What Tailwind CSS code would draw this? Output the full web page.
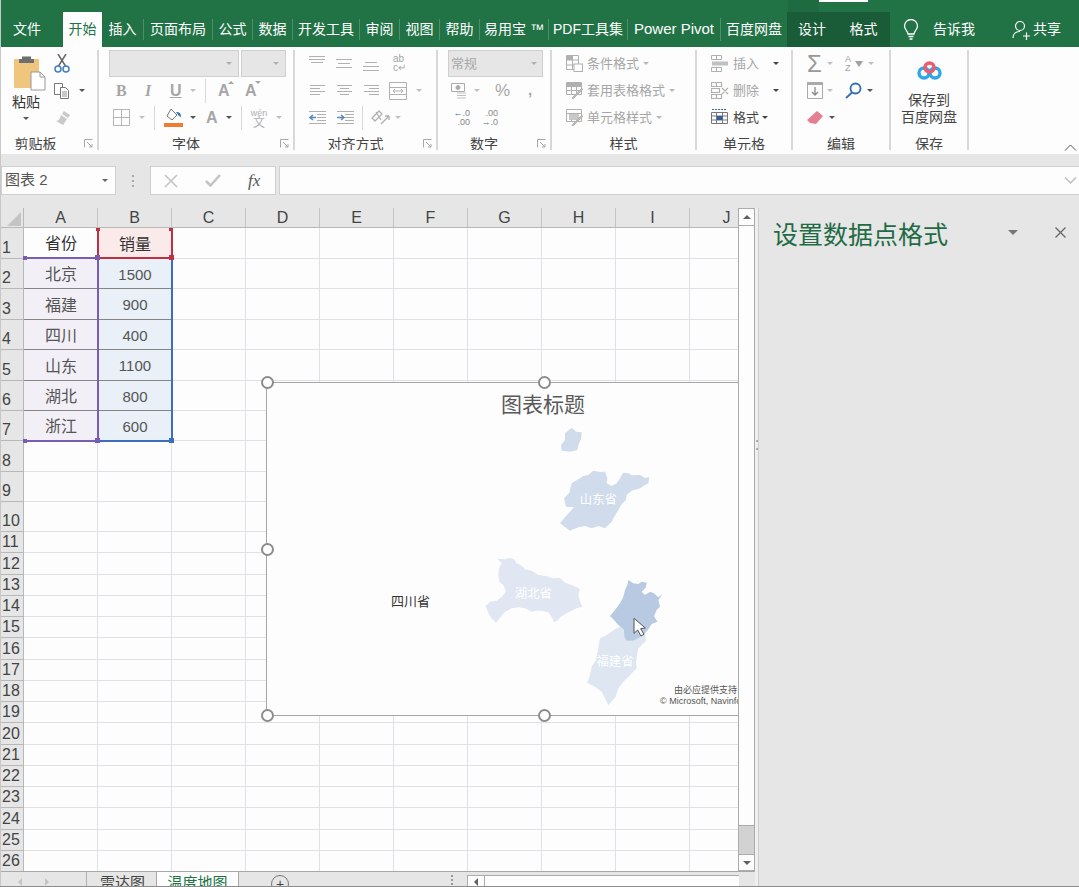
<!DOCTYPE html>
<html lang="zh-CN">
<head>
<meta charset="UTF-8" />
<title>Excel 温度地图</title>
<script src="https://cdn.jsdelivr.net/npm/@tailwindcss/browser@4"></script>
</head>
<body class="bg-[#e6e6e6] [font-family:'Liberation_Sans','Noto_Sans_CJK_SC',sans-serif]">
<div class="relative w-[1079px] h-[887px] overflow-hidden flex flex-col">

  <!-- 标题栏 + 选项卡 -->
  <div class="h-[47px] bg-[#217346] text-white text-[14px]">
    <div class="h-[12px] flex">
      <div class="w-[788px]"></div>
      <div class="w-[31px] bg-[#1f6b41]"></div>
      <div class="w-[49px] h-[2px] bg-white"></div>
    </div>
    <div class="h-[35px] flex items-center">
      <div class="w-[54px] mr-[9px] text-center">文件</div>
      <div class="w-[39px] h-full bg-[#fdfdfd] text-[#217346] flex items-center justify-center">开始</div>
      <div class="w-[42px] text-center border-r border-white/20">插入</div>
      <div class="w-[69px] text-center border-r border-white/20">页面布局</div>
      <div class="w-[40px] text-center border-r border-white/20">公式</div>
      <div class="w-[40px] text-center border-r border-white/20">数据</div>
      <div class="w-[67px] text-center border-r border-white/20">开发工具</div>
      <div class="w-[40px] text-center border-r border-white/20">审阅</div>
      <div class="w-[40px] text-center border-r border-white/20">视图</div>
      <div class="w-[40px] text-center border-r border-white/20">帮助</div>
      <div class="w-[69px] text-center border-r border-white/20 whitespace-nowrap">易用宝 ™</div>
      <div class="w-[79px] text-center border-r border-white/20 whitespace-nowrap">PDF工具集</div>
      <div class="w-[93px] text-center border-r border-white/20 whitespace-nowrap text-[15px]">Power Pivot</div>
      <div class="w-[66px] text-center whitespace-nowrap">百度网盘</div>
      <div class="w-[103px] h-full bg-[#1a5c38] flex items-center">
        <span class="w-[50px] text-center">设计</span>
        <span class="w-[53px] text-center">格式</span>
      </div>
      <svg class="ml-[13px]" width="16" height="22" viewBox="0 0 16 22" fill="none" stroke="#fff" stroke-width="1.3"><path d="M5 15c0-3-3.500-4-3.500-8a6.500 6.500 0 0 1 13 0c0 4-3.500 5-3.500 8z"/><path d="M5.500 17.500h5M6.500 20h3"/></svg>
      <span class="ml-[14px] w-[42px]">告诉我</span>
      <svg class="ml-[37px]" width="18" height="20" viewBox="0 0 18 20" fill="none" stroke="#fff" stroke-width="1.2"><circle cx="8" cy="6" r="4.500"/><path d="M1 18c0-4 3-6.500 7-6.500M11 16h7M14.500 12.500V20"/></svg>
      <span class="ml-[3px]">共享</span>
    </div>
  </div>

  <!-- 功能区 -->
  <div class="relative h-[107px] bg-[#fdfdfd] pt-[3px] flex items-start text-[13px] text-[#444]">

    <!-- 剪贴板 -->
    <div class="relative w-[99px] h-[100px] border-r-2 border-[#d8d8d8] flex flex-col shrink-0">
      <div class="h-[81px] flex">
        <div class="w-[52px] flex flex-col items-center">
          <svg class="mt-[5px] ml-[7px]" width="32" height="36" viewBox="0 0 32 36"><rect x="0" y="4" width="25" height="29" fill="#f0c67e"/><path d="M8 4V1.500h9V4h3v4H5V4z" fill="#6e6e6e"/><path d="M17 17h9l5 5v13H17z" fill="#fff" stroke="#999"/><path d="M26 17v5h5" fill="none" stroke="#999"/></svg>
          <span class="text-[14px] leading-[18px] mt-[2px] text-[#333]">粘贴</span>
          <span class="w-0 h-0 mt-[6px] border-x-[3px] border-t-[3px] border-x-transparent border-t-[#555]"></span>
        </div>
        <div class="flex flex-col">
          <div class="h-[27px] flex items-center">
            <svg class="ml-[2px]" width="16" height="19" viewBox="0 0 16 19" fill="none"><path d="M4 0l7.500 12M12 0L4.500 12" stroke="#666" stroke-width="1.500"/><circle cx="4" cy="15" r="3" stroke="#3f7fc4" stroke-width="1.500"/><circle cx="12" cy="15" r="3" stroke="#3f7fc4" stroke-width="1.500"/></svg>
          </div>
          <div class="h-[27px] flex items-center">
            <svg class="ml-[2px]" width="16" height="17" viewBox="0 0 16 17" fill="#fff" stroke="#777"><path d="M.5 1.500h8v11h-8z"/><path d="M6.500 5.500h5l3 3v8h-8z"/><path d="M8 10h5M8 12h5M8 14h5" stroke-width=".8"/></svg>
            <span class="ml-[9px] w-0 h-0 border-x-[3px] border-t-[3px] border-x-transparent border-t-[#555]"></span>
          </div>
          <div class="h-[27px] flex items-center">
            <svg class="ml-[3px]" width="16" height="15" viewBox="0 0 16 15" fill="#c9c9c9"><path d="M9 1l6 4-2 3-6-4zM6 5l6 4-4 6-7-4c3 0 4-3 5-6z"/></svg>
          </div>
        </div>
      </div>
      <div class="relative h-[19px] overflow-hidden text-center leading-[26px] pr-[26px] text-[14px]">剪贴板</div>
      <svg class="absolute right-[4px] bottom-[2px]" width="9" height="9" viewBox="0 0 9 9" fill="none" stroke="#a8a8a8"><path d="M.5 8.500v-8h8M3 3l5 5M8 5v3H5"/></svg>
    </div>

    <!-- 字体 -->
    <div class="relative w-[196px] h-[100px] border-r-2 border-[#d8d8d8] flex flex-col shrink-0">
      <div class="h-[27px] flex pl-[10px] gap-[2px]">
        <div class="w-[130px] h-[27px] bg-[#e6e6e6] border border-[#cfcfcf] flex items-center justify-end pr-[6px]"><span class="w-0 h-0 border-x-[3px] border-t-[3px] border-x-transparent border-t-[#b0b0b0]"></span></div>
        <div class="w-[45px] h-[27px] bg-[#e6e6e6] border border-[#cfcfcf] flex items-center justify-end pr-[6px]"><span class="w-0 h-0 border-x-[3px] border-t-[3px] border-x-transparent border-t-[#b0b0b0]"></span></div>
      </div>
      <div class="h-[27px] flex items-center text-[#a6a6a6] font-bold text-[16px]">
        <span class="ml-[17px] w-[10px] [font-family:'Liberation_Serif',serif]">B</span>
        <span class="ml-[19px] w-[8px] italic [font-family:'Liberation_Serif',serif]">I</span>
        <span class="ml-[17px] w-[11px] underline">U</span>
        <span class="ml-[9px] w-0 h-0 border-x-[3px] border-t-[3px] border-x-transparent border-t-[#c0c0c0]"></span>
        <span class="ml-[9px] w-px h-[24px] bg-[#d8d8d8]"></span>
        <span class="ml-[12px] w-[16px] relative">A<span class="absolute right-0 top-[2px] w-0 h-0 border-x-[3px] border-b-[3px] border-x-transparent border-b-[#a6a6a6]"></span></span>
        <span class="ml-[11px] w-[16px] relative">A<span class="absolute right-0 top-[2px] w-0 h-0 border-x-[3px] border-t-[3px] border-x-transparent border-t-[#a6a6a6]"></span></span>
      </div>
      <div class="h-[27px] flex items-center">
        <svg class="ml-[14px]" width="17" height="17" viewBox="0 0 17 17" fill="none" stroke="#b5b5b5"><path d="M.5.500h16v16H.5zM8.500.500v16M.5 8.500h16"/></svg>
        <span class="ml-[9px] w-0 h-0 border-x-[3px] border-t-[3px] border-x-transparent border-t-[#c0c0c0]"></span>
        <span class="ml-[9px] w-px h-[24px] bg-[#d8d8d8]"></span>
        <svg class="ml-[9px]" width="19" height="19" viewBox="0 0 19 19"><path d="M7 1l6 6-5 5-5-4z" fill="#fff" stroke="#777"/><path d="M12 4c3 0 5 1 5 5l-2-1z" fill="#2f6fb5"/><rect x="0" y="15" width="19" height="4" fill="#ed7d31"/></svg>
        <span class="ml-[7px] w-0 h-0 border-x-[3px] border-t-[3px] border-x-transparent border-t-[#555]"></span>
        <span class="ml-[10px] w-[14px] text-[#a6a6a6] font-bold text-[16px] leading-none">A</span>
        <span class="ml-[6px] w-0 h-0 border-x-[3px] border-t-[3px] border-x-transparent border-t-[#555]"></span>
        <span class="ml-[9px] w-px h-[24px] bg-[#d8d8d8]"></span>
        <span class="ml-[6px] w-[22px] flex flex-col items-center text-[#b0b0b0] text-[9px] leading-[10px]"><span>wén</span><span class="text-[12px]">文</span></span>
        <span class="ml-[6px] w-0 h-0 border-x-[3px] border-t-[3px] border-x-transparent border-t-[#c0c0c0]"></span>
      </div>
      <div class="h-[19px] overflow-hidden text-center leading-[26px] text-[14px] pr-[20px] mt-0">字体</div>
      <svg class="absolute right-[4px] bottom-[2px]" width="9" height="9" viewBox="0 0 9 9" fill="none" stroke="#a8a8a8"><path d="M.5 8.500v-8h8M3 3l5 5M8 5v3H5"/></svg>
    </div>

    <!-- 对齐方式 -->
    <div class="relative w-[143px] h-[100px] border-r-2 border-[#d8d8d8] flex flex-col shrink-0">
      <div class="h-[27px] flex items-start pt-[6px] pl-[14px] gap-[11px]">
        <svg width="16" height="8" viewBox="0 0 16 8" stroke="#b0b0b0"><path d="M0 .5h16M0 3.500h16M2 6.500h12"/></svg>
        <svg class="mt-[3px]" width="16" height="9" viewBox="0 0 16 9" stroke="#b0b0b0"><path d="M0 .5h16M2 4.500h12M0 8.500h16"/></svg>
        <svg class="mt-[6px]" width="16" height="9" viewBox="0 0 16 9" stroke="#b0b0b0"><path d="M2 .5h12M0 4.500h16M0 8.500h16"/></svg>
        <span class="ml-[3px] -mt-[2px] w-[16px] text-[#a6a6a6] text-[10px] leading-[9px]">ab<br>c↵</span>
      </div>
      <div class="h-[27px] flex items-center pl-[15px]">
        <svg width="15" height="11" viewBox="0 0 15 11" stroke="#b0b0b0"><path d="M0 .5h15M0 3.500h10M0 6.500h15M0 9.500h10"/></svg>
        <svg class="ml-[12px]" width="15" height="11" viewBox="0 0 15 11" stroke="#b0b0b0"><path d="M0 .5h15M3 3.500h9M0 6.500h15M3 9.500h9"/></svg>
        <svg class="ml-[12px]" width="15" height="11" viewBox="0 0 15 11" stroke="#b0b0b0"><path d="M0 .5h15M5 3.500h10M0 6.500h15M5 9.500h10"/></svg>
        <svg class="ml-[10px]" width="18" height="18" viewBox="0 0 18 18" fill="none" stroke="#b0b0b0"><path d="M.5.500h17v17H.5zM.5 5.500h17M.5 12.500h17M4 9h10M4 9l2-2M4 9l2 2M14 9l-2-2M14 9l-2 2"/></svg>
        <span class="ml-[9px] w-0 h-0 border-x-[3px] border-t-[3px] border-x-transparent border-t-[#c0c0c0]"></span>
      </div>
      <div class="h-[27px] flex items-center pl-[14px]">
        <svg width="17" height="13" viewBox="0 0 17 13" fill="none" stroke="#b0b0b0"><path d="M0 .5h17M8 3.500h9M8 6.500h9M8 9.500h9M0 12.500h17"/><path d="M7 6.500H1M4 4L1 6.500 4 9" stroke="#5b88bd" stroke-width="1.500"/></svg>
        <svg class="ml-[11px]" width="17" height="13" viewBox="0 0 17 13" fill="none" stroke="#b0b0b0"><path d="M0 .5h17M8 3.500h9M8 6.500h9M8 9.500h9M0 12.500h17"/><path d="M0 6.500h6M4 4l3 2.500L4 9" stroke="#5b88bd" stroke-width="1.500"/></svg>
        <span class="ml-[8px] w-px h-[24px] bg-[#d8d8d8]"></span>
        <svg class="ml-[8px]" width="19" height="17" viewBox="0 0 19 17" fill="none" stroke="#b0b0b0" stroke-width="1.300"><path d="M1 9l7-7 3 3-7 7zM5 3l5 8M10 15L18 7M18 7h-4M18 7v4"/></svg>
        <span class="ml-[5px] w-0 h-0 border-x-[3px] border-t-[3px] border-x-transparent border-t-[#c0c0c0]"></span>
      </div>
      <div class="h-[19px] overflow-hidden text-center leading-[26px] text-[14px] pr-[20px]">对齐方式</div>
      <svg class="absolute right-[4px] bottom-[2px]" width="9" height="9" viewBox="0 0 9 9" fill="none" stroke="#a8a8a8"><path d="M.5 8.500v-8h8M3 3l5 5M8 5v3H5"/></svg>
    </div>

    <!-- 数字 -->
    <div class="relative w-[114px] h-[100px] border-r-2 border-[#d8d8d8] flex flex-col shrink-0">
      <div class="h-[27px] pl-[10px]">
        <div class="w-[95px] h-[27px] bg-[#e6e6e6] border border-[#cfcfcf] flex items-center justify-between pl-[2px] pr-[5px] text-[#a6a6a6] text-[13px]">常规<span class="w-0 h-0 border-x-[3px] border-t-[3px] border-x-transparent border-t-[#b0b0b0]"></span></div>
      </div>
      <div class="h-[27px] flex items-center pl-[13px]">
        <svg width="16" height="18" viewBox="0 0 16 18" fill="none" stroke="#aaa"><path d="M.5 1.500h13v8H.5z"/><circle cx="7" cy="5.500" r="2" fill="#aaa"/><path d="M6 11h9M6 13.500h9M6 16h9" stroke="#c0c0c0"/></svg>
        <span class="ml-[7px] w-0 h-0 border-x-[3px] border-t-[3px] border-x-transparent border-t-[#c0c0c0]"></span>
        <span class="ml-[15px] w-[16px] text-[#a6a6a6] text-[17px]">%</span>
        <span class="ml-[17px] text-[#a6a6a6] font-bold text-[15px]">,</span>
      </div>
      <div class="h-[27px] flex items-center pl-[14px] text-[9px] leading-[9px] text-[#888] text-right">
        <span class="w-[18px]"><span class="text-[#3f73b5]">←</span>.0<br>.00</span>
        <span class="ml-[10px] w-[18px]">.00<br><span class="text-[#3f73b5]">→</span>.0</span>
      </div>
      <div class="h-[19px] overflow-hidden text-center leading-[26px] text-[14px] pr-[20px]">数字</div>
      <svg class="absolute right-[4px] bottom-[2px]" width="9" height="9" viewBox="0 0 9 9" fill="none" stroke="#a8a8a8"><path d="M.5 8.500v-8h8M3 3l5 5M8 5v3H5"/></svg>
    </div>

    <!-- 样式 -->
    <div class="w-[145px] h-[100px] border-r-2 border-[#d8d8d8] flex flex-col shrink-0 text-[#a6a6a6]">
      <div class="h-[27px] flex items-center pl-[14px] gap-[4px]">
        <svg width="17" height="17" viewBox="0 0 17 17" fill="none" stroke="#b0b0b0"><path d="M.5.500h12v14H.5zM.5 5h12M.5 10h12M6.500.500v14"/><rect x="8" y="9" width="8.500" height="7.500" fill="#fff"/><rect x="1" y="1" width="5" height="4" fill="#b0b0b0" stroke="none"/></svg>
        <span>条件格式</span><span class="w-0 h-0 border-x-[3px] border-t-[3px] border-x-transparent border-t-[#b8b8b8]"></span>
      </div>
      <div class="h-[27px] flex items-center pl-[14px] gap-[4px]">
        <svg width="17" height="17" viewBox="0 0 17 17" fill="none" stroke="#b0b0b0"><path d="M.5.500h15v12H.5zM.5 4.500h15M.5 8.500h15M5.500 4.500v8M10.500 4.500v8"/><rect x="1" y="1" width="14" height="3" fill="#b0b0b0" stroke="none"/><path d="M16 6l-9 9-1 2 2-1 9-9" fill="#c0c0c0"/></svg>
        <span>套用表格格式</span><span class="w-0 h-0 border-x-[3px] border-t-[3px] border-x-transparent border-t-[#b8b8b8]"></span>
      </div>
      <div class="h-[27px] flex items-center pl-[14px] gap-[4px]">
        <svg width="17" height="17" viewBox="0 0 17 17" fill="none" stroke="#b0b0b0"><path d="M.5.500h15v12H.5zM.5 4.500h15M5.500 4.500v8M10.500 4.500v8"/><rect x="3" y="5" width="10" height="6" fill="#c8c8c8" stroke="none"/><path d="M16 6l-9 9-1 2 2-1 9-9" fill="#c0c0c0"/></svg>
        <span>单元格样式</span><span class="w-0 h-0 border-x-[3px] border-t-[3px] border-x-transparent border-t-[#b8b8b8]"></span>
      </div>
      <div class="h-[19px] overflow-hidden text-center leading-[26px] text-[14px] text-[#444]">样式</div>
    </div>

    <!-- 单元格 -->
    <div class="w-[96px] h-[100px] border-r-2 border-[#d8d8d8] flex flex-col shrink-0">
      <div class="h-[27px] flex items-center pl-[14px] text-[#a6a6a6]">
        <svg width="18" height="17" viewBox="0 0 18 17" fill="none" stroke="#b0b0b0"><path d="M.5.500h10v4H.5zM.5 12.500h10v4H.5zM5.500.500v4M5.500 12.500v4"/><rect x="1" y="6.500" width="16" height="4" fill="#c0c0c0" stroke="none"/></svg>
        <span class="ml-[4px] w-[34px]">插入</span>
        <span class="ml-[6px] w-0 h-0 border-x-[3px] border-t-[3px] border-x-transparent border-t-[#444]"></span>
      </div>
      <div class="h-[27px] flex items-center pl-[14px] text-[#a6a6a6]">
        <svg width="18" height="17" viewBox="0 0 18 17" fill="none" stroke="#b0b0b0"><path d="M.5.500h10v4H.5zM.5 12.500h10v4H.5zM5.500.500v4M5.500 12.500v4M.5 6.500h8v4h-8zM11 6l6 6M17 6l-6 6" stroke-width="1.200"/></svg>
        <span class="ml-[4px] w-[34px]">删除</span>
        <span class="ml-[6px] w-0 h-0 border-x-[3px] border-t-[3px] border-x-transparent border-t-[#444]"></span>
      </div>
      <div class="h-[27px] flex items-center pl-[14px]">
        <svg width="18" height="19" viewBox="0 0 18 19" fill="none" stroke="#777"><path d="M.5 4.500h16v11H.5zM.5 8h16M.5 12h16M5.500 4.500v11M11.500 4.500v11"/><rect x="6" y="8" width="5.500" height="4" fill="#2f5f9e" stroke="none"/><path d="M1 1.500h15" stroke="#2f6fb5" stroke-dasharray="2 1"/></svg>
        <span class="ml-[4px]">格式</span>
        <span class="ml-[3px] w-0 h-0 border-x-[3px] border-t-[3px] border-x-transparent border-t-[#444]"></span>
      </div>
      <div class="h-[19px] overflow-hidden text-center leading-[26px] text-[14px]">单元格</div>
    </div>

    <!-- 编辑 -->
    <div class="w-[98px] h-[100px] border-r-2 border-[#d8d8d8] flex flex-col shrink-0">
      <div class="h-[27px] flex items-center pl-[14px]">
        <span class="w-[16px] text-[#999] text-[24px] leading-none">Σ</span>
        <span class="ml-[4px] w-0 h-0 border-x-[3px] border-t-[3px] border-x-transparent border-t-[#c0c0c0]"></span>
        <span class="ml-[12px] w-[10px] text-[#a0a0a0] text-[9px] leading-[9px]">A<br>Z</span>
        <span class="w-0 h-0 border-x-[4px] border-t-[6px] border-x-transparent border-t-[#a0a0a0]"></span>
        <span class="ml-[5px] w-0 h-0 border-x-[3px] border-t-[3px] border-x-transparent border-t-[#c0c0c0]"></span>
      </div>
      <div class="h-[27px] flex items-center pl-[14px]">
        <svg width="16" height="17" viewBox="0 0 16 17" fill="none" stroke="#aaa"><path d="M.5.500h15v16H.5z"/><path d="M.5.500h15v2H.5z" fill="#aaa"/><path d="M8 5v8M5 10l3 3 3-3" stroke="#888" stroke-width="1.300"/></svg>
        <span class="ml-[4px] w-0 h-0 border-x-[3px] border-t-[3px] border-x-transparent border-t-[#c0c0c0]"></span>
        <svg class="ml-[12px]" width="17" height="17" viewBox="0 0 17 17" fill="none" stroke="#2f6fb5" stroke-width="1.800"><circle cx="10.500" cy="6.500" r="5"/><path d="M7 10.500l-6 5.500"/></svg>
        <span class="ml-[5px] w-0 h-0 border-x-[3px] border-t-[3px] border-x-transparent border-t-[#555]"></span>
      </div>
      <div class="h-[27px] flex items-center pl-[14px]">
        <svg width="16" height="14" viewBox="0 0 16 14"><path d="M10 0l6 5-7 8-6-1-3-3z" fill="#e67f91"/></svg>
        <span class="ml-[6px] w-0 h-0 border-x-[3px] border-t-[3px] border-x-transparent border-t-[#555]"></span>
      </div>
      <div class="h-[19px] overflow-hidden text-center leading-[26px] text-[14px]">编辑</div>
    </div>

    <!-- 保存 -->
    <div class="w-[78px] h-[100px] border-r-2 border-[#d8d8d8] flex flex-col items-center shrink-0">
      <svg class="mt-[11px]" width="25" height="19" viewBox="0 0 25 19" fill="none" stroke-width="3.400"><circle cx="7" cy="12" r="5" stroke="#2ea7e8"/><circle cx="18" cy="12" r="5" stroke="#2ea7e8"/><circle cx="12.500" cy="6.500" r="4.500" stroke="#ef5b6e"/></svg>
      <div class="mt-[12px] text-center text-[14px] leading-[17px] h-[39px]">保存到<br>百度网盘</div>
      <div class="h-[19px] overflow-hidden text-center leading-[26px] text-[14px]">保存</div>
    </div>

    <svg class="absolute right-[2px] bottom-[3px]" width="13" height="7" viewBox="0 0 13 7" fill="none" stroke="#555"><path d="M1 6.500l5.500-5.500 5.500 5.500"/></svg>
  </div>

  <!-- 编辑栏 -->
  <div class="mt-[12px] h-[29px] flex text-[#555]">
    <div class="w-[115px] ml-px bg-[#fdfdfd] border border-[#d0d0d0] flex items-center justify-between pl-[3px] pr-[7px] text-[15px]">图表 2<span class="w-0 h-0 border-x-[3px] border-t-[3px] border-x-transparent border-t-[#666]"></span></div>
    <div class="w-[34px] flex flex-col items-center justify-center gap-[3px]"><span class="w-[2px] h-[2px] bg-[#aaa]"></span><span class="w-[2px] h-[2px] bg-[#aaa]"></span><span class="w-[2px] h-[2px] bg-[#aaa]"></span></div>
    <div class="w-[126px] bg-[#fdfdfd] border border-[#d0d0d0] flex items-center">
      <svg class="ml-[13px]" width="14" height="14" viewBox="0 0 14 14" stroke="#c4c4c4" stroke-width="1.600"><path d="M1 1l12 12M13 1L1 13"/></svg>
      <svg class="ml-[27px]" width="16" height="13" viewBox="0 0 16 13" fill="none" stroke="#c4c4c4" stroke-width="2.600"><path d="M1 7l4.500 4.500L15 1"/></svg>
      <span class="ml-[27px] italic text-[17px] text-[#555] [font-family:'Liberation_Serif',serif]">fx</span>
    </div>
    <div class="ml-[3px] flex-1 bg-[#fdfdfd] border-y border-l border-[#d0d0d0] flex items-center justify-end pr-[2px]">
      <svg width="13" height="7" viewBox="0 0 13 7" fill="none" stroke="#c0c0c0" stroke-width="1.500"><path d="M1 .5l5.500 5.500L12 .5"/></svg>
    </div>
  </div>

  <!-- 工作表 + 任务窗格 -->
  <div class="mt-[13px] flex-1 flex min-h-0">
    <div class="w-[755px] flex flex-col shrink-0">
      <div class="flex-1 flex min-h-0">
        <div id="sheet" class="relative w-[738px] overflow-hidden bg-[#fdfdfd]">
          <div id="head" class="flex h-[20px] bg-[#e6e6e6] border-b border-[#b8b8b8]"></div>
          <div id="rows"></div>

          <!-- 数据区域选择框 -->
          <div class="absolute left-[24px] top-[49px] w-[75px] h-[185px] border-y-2 border-r-2 border-[#7a5cb0]"></div>
          <div class="absolute left-[98px] top-[50px] w-[75px] h-[184px] border-b-2 border-r-2 border-[#3c6dbf]"></div>
          <div class="absolute left-[97px] top-[20px] w-[76px] h-[31px] border-x-2 border-b-2 border-[#c03040]"></div>
          <span class="absolute left-[23px] top-[48px] w-[4px] h-[4px] bg-[#7a5cb0]"></span>
          <span class="absolute left-[95px] top-[47px] w-[5px] h-[5px] bg-[#7a5cb0]"></span>
          <span class="absolute left-[23px] top-[231px] w-[4px] h-[4px] bg-[#7a5cb0]"></span>
          <span class="absolute left-[95px] top-[230px] w-[5px] h-[5px] bg-[#7a5cb0]"></span>
          <span class="absolute left-[169px] top-[230px] w-[5px] h-[5px] bg-[#3c6dbf]"></span>
          <span class="absolute left-[169px] top-[47px] w-[5px] h-[5px] bg-[#c03040]"></span>
          <span class="absolute left-[96px] top-[20px] w-[4px] h-[3px] bg-[#c03040]"></span>
          <span class="absolute left-[169px] top-[20px] w-[4px] h-[3px] bg-[#c03040]"></span>

          <!-- 地图图表 -->
          <div class="absolute left-[266px] top-[174px] w-[554px] h-[334px] bg-[#fdfdfd] border border-[#a6a6a6]">
            <div class="text-center text-[21px] leading-[30px] mt-[7px] text-[#595959]">图表标题</div>
            <svg class="absolute left-[203px] top-[17px]" width="290" height="330" viewBox="0 0 870 990">
              <polygon fill="#d0dbec" points="305,83 318,95 335,97 333,118 325,135 322,150 300,155 275,152 273,135 285,120 285,100"/>
              <polygon fill="#d0dbec" points="270,370 285,352 300,335 312,322 288,320 282,295 298,278 305,250 325,238 340,228 355,225 370,212 390,216 405,215 412,235 410,250 425,258 440,250 450,235 460,218 475,220 485,226 510,225 525,234 538,232 535,250 520,258 510,265 485,272 470,285 468,300 455,312 445,330 432,352 425,365 405,385 385,378 365,385 345,378 325,382 300,392"/>
              <polygon fill="#e0e7f2" points="82,476 105,478 118,474 132,477 140,490 155,497 165,508 185,512 205,525 230,528 248,535 270,533 285,548 305,555 320,562 330,568 325,585 330,605 338,620 320,625 305,632 290,640 272,650 262,662 252,667 245,650 235,637 215,632 200,632 185,635 165,625 145,622 125,625 105,635 92,650 78,668 65,655 55,640 47,618 60,605 80,602 95,590 108,575 100,555 88,545 85,525 87,505 95,490"/>
              <polygon fill="#dde6f1" points="440,685 450,680 462,690 463,712 470,722 490,722 510,712 525,700 528,722 515,735 505,745 500,770 498,790 500,805 480,825 460,845 445,865 437,890 415,915 405,895 395,875 375,860 352,848 360,825 365,800 378,780 385,745 390,715 410,705"/>
              <polygon fill="#b8c9e2" points="475,540 490,550 505,552 515,545 530,548 528,562 515,575 525,585 540,575 552,580 565,592 578,582 565,600 570,620 560,630 552,648 562,665 545,672 535,688 525,700 510,712 490,722 470,722 463,712 462,690 445,675 432,660 420,648 435,630 450,610 460,590 465,570 472,555"/>
              <g fill="#fff" font-size="37" text-anchor="middle">
                <text x="385" y="313">山东省</text>
                <text x="190" y="593">湖北省</text>
                <text x="435" y="798">福建省</text>
              </g>
              <polygon fill="#fff" stroke="#555" stroke-width="3" points="492,655 492,700 503,690 513,708 522,703 512,686 526,684"/>
            </svg>
            <span class="absolute left-[124px] top-[211px] text-[13px] leading-[16px] text-[#333]">四川省</span>
            <div class="absolute left-[393px] top-[302px] w-[160px] text-[9px] leading-[11px] text-[#555] whitespace-nowrap">
              <div class="pl-[14px]">由必应提供支持</div>
              <div>© Microsoft, Navinfo</div>
            </div>
            <span class="absolute -left-[6px] -top-[7px] w-[13px] h-[13px] rounded-full bg-white border-2 border-[#8c8c8c]"></span>
            <span class="absolute left-[271px] -top-[7px] w-[13px] h-[13px] rounded-full bg-white border-2 border-[#8c8c8c]"></span>
            <span class="absolute -left-[6px] top-[160px] w-[13px] h-[13px] rounded-full bg-white border-2 border-[#8c8c8c]"></span>
            <span class="absolute -left-[6px] top-[326px] w-[13px] h-[13px] rounded-full bg-white border-2 border-[#8c8c8c]"></span>
            <span class="absolute left-[271px] top-[326px] w-[13px] h-[13px] rounded-full bg-white border-2 border-[#8c8c8c]"></span>
          </div>
        </div>

        <!-- 垂直滚动条 -->
        <div class="w-[17px] flex flex-col bg-[#e6e6e6] shrink-0">
          <div class="h-[18px] bg-[#fdfdfd] border border-[#ababab] flex items-center justify-center"><span class="w-0 h-0 border-x-[4px] border-b-[4px] border-x-transparent border-b-[#606060]"></span></div>
          <div class="h-[600px] bg-[#fdfdfd] border-x border-b border-[#ababab]"></div>
          <div class="flex-1 bg-[#d2d2d2] border-x border-[#ababab]"></div>
          <div class="h-[17px] bg-[#fdfdfd] border border-[#ababab] flex items-center justify-center"><span class="w-0 h-0 border-x-[4px] border-t-[4px] border-x-transparent border-t-[#606060]"></span></div>
        </div>
      </div>

      <!-- 工作表标签 -->
      <div class="h-[16px] flex items-start overflow-hidden bg-[#e6e6e6] border-t border-[#a8a8a8] text-[15px] leading-[20px] text-[#444]">
        <span class="ml-[18px] mt-[6px] w-0 h-0 border-y-[4px] border-r-[4px] border-y-transparent border-r-[#c4c4c4]"></span>
        <span class="ml-[23px] mt-[6px] w-0 h-0 border-y-[4px] border-l-[4px] border-y-transparent border-l-[#c4c4c4]"></span>
        <span class="ml-[37px] w-[70px] h-full border-l border-[#b0b0b0] text-center pt-px pl-[2px]">雷达图</span>
        <span class="w-[83px] h-[20px] bg-[#fdfdfd] border-x border-[#a8a8a8] text-center text-[#217346] pt-px">温度地图</span>
        <span class="ml-[32px] mt-[3px] w-[18px] h-[18px] rounded-full border border-[#777] flex items-center justify-center text-[14px] leading-none">+</span>
        <span class="ml-[162px] mt-[3px] flex flex-col gap-[2px]"><span class="w-[2px] h-[2px] bg-[#999]"></span><span class="w-[2px] h-[2px] bg-[#999]"></span><span class="w-[2px] h-[2px] bg-[#999]"></span></span>
        <span class="ml-[14px] mt-[3px] w-[18px] h-[14px] bg-[#fdfdfd] border border-[#ababab] flex items-center justify-center"><span class="w-0 h-0 border-y-[4px] border-r-[4px] border-y-transparent border-r-[#606060]"></span></span>
        <span class="mt-[3px] w-[254px] h-[14px] bg-[#fdfdfd] border-y border-[#ababab]"></span>
      </div>
    </div>

    <!-- 分隔条 -->
    <div class="relative w-[4px] shrink-0 bg-[#efefef] border-r border-[#cdcdcd]">
      <span class="absolute left-[1px] top-[232px] w-[2px] h-[10px] border-y-2 border-[#b0b0b0]"></span>
    </div>

    <!-- 设置数据点格式 -->
    <div class="flex-1 bg-[#e6e6e6]">
      <div class="flex items-center pl-[14px] pt-[11px] h-[37px]">
        <span class="w-[235px] text-[25px] leading-[36px] text-[#1f6b45] whitespace-nowrap translate-y-[3px]">设置数据点格式</span>
        <span class="w-0 h-0 border-x-[5px] border-t-[5px] border-x-transparent border-t-[#777]"></span>
        <svg class="ml-[37px]" width="11" height="11" viewBox="0 0 11 11" stroke="#666" stroke-width="1.300"><path d="M.5.500l10 10M10.500.500l-10 10"/></svg>
      </div>
    </div>
  </div>

  <!-- 窗口边线 -->
  <div class="absolute left-0 top-0 w-px h-full bg-[#c8c8c8]"></div>
  <div class="absolute left-0 bottom-0 w-full h-px bg-[#8c8c8c]"></div>
</div>

<script>
  const colLetters = ['A', 'B', 'C', 'D', 'E', 'F', 'G', 'H', 'I', 'J'];
  const data = [['省份', '销量'], ['北京', '1500'], ['福建', '900'], ['四川', '400'], ['山东', '1100'], ['湖北', '800'], ['浙江', '600']];
  const tallRows = [31, 30, 31, 30, 31, 30, 30, 31, 30, 30];

  let head = '<div class="w-[24px] h-full shrink-0 border-r border-[#b8b8b8] flex items-end justify-end pr-[2px] pb-[1px]"><svg width="14" height="14" viewBox="0 0 14 14"><path d="M14 0v14H0z" fill="#c4c4c4"/></svg></div>';
  colLetters.forEach(c => {
    head += `<div class="w-[74px] shrink-0 border-r border-[#c4c4c4] text-center text-[16px] leading-[20px] text-[#444]">${c}</div>`;
  });
  document.getElementById('head').innerHTML = head;

  let rows = '';
  for (let r = 0; r < 26; r++) {
    const h = r < 10 ? tallRows[r] : 21.25;
    let cells = `<div class="w-[24px] shrink-0 bg-[#e6e6e6] border-r border-b border-[#b8b8b8] flex items-end pl-[2px] text-[16px] leading-[21px] text-[#444]">${r + 1}</div>`;
    colLetters.forEach((c, i) => {
      let cls = 'w-[74px] shrink-0 border-r border-b border-[#e0e0e6] flex items-center justify-center';
      if (r < 7 && i < 2) {
        const size = (r === 0 || i === 0) ? ' text-[16px]' : ' text-[15px]';
        if (r === 0) {
          cls = 'w-[74px] shrink-0 flex items-center justify-center pt-[2px] text-[#333] ' + (i === 1 ? 'bg-[#faeaea]' : 'border-b border-[#e0e0e6]') + size;
        } else {
          cls = 'w-[74px] shrink-0 flex items-center justify-center pt-[3px] text-[#555] border-b border-[#858585] ' + (i === 0 ? 'bg-[#f2eff7]' : 'bg-[#e9f0f8]') + size;
        }
      }
      cells += `<div class="${cls}">${r < 7 && i < 2 ? data[r][i] : ''}</div>`;
    });
    rows += `<div class="flex" style="height:${h}px">${cells}</div>`;
  }
  document.getElementById('rows').innerHTML = rows;
</script>
</body>
</html>
